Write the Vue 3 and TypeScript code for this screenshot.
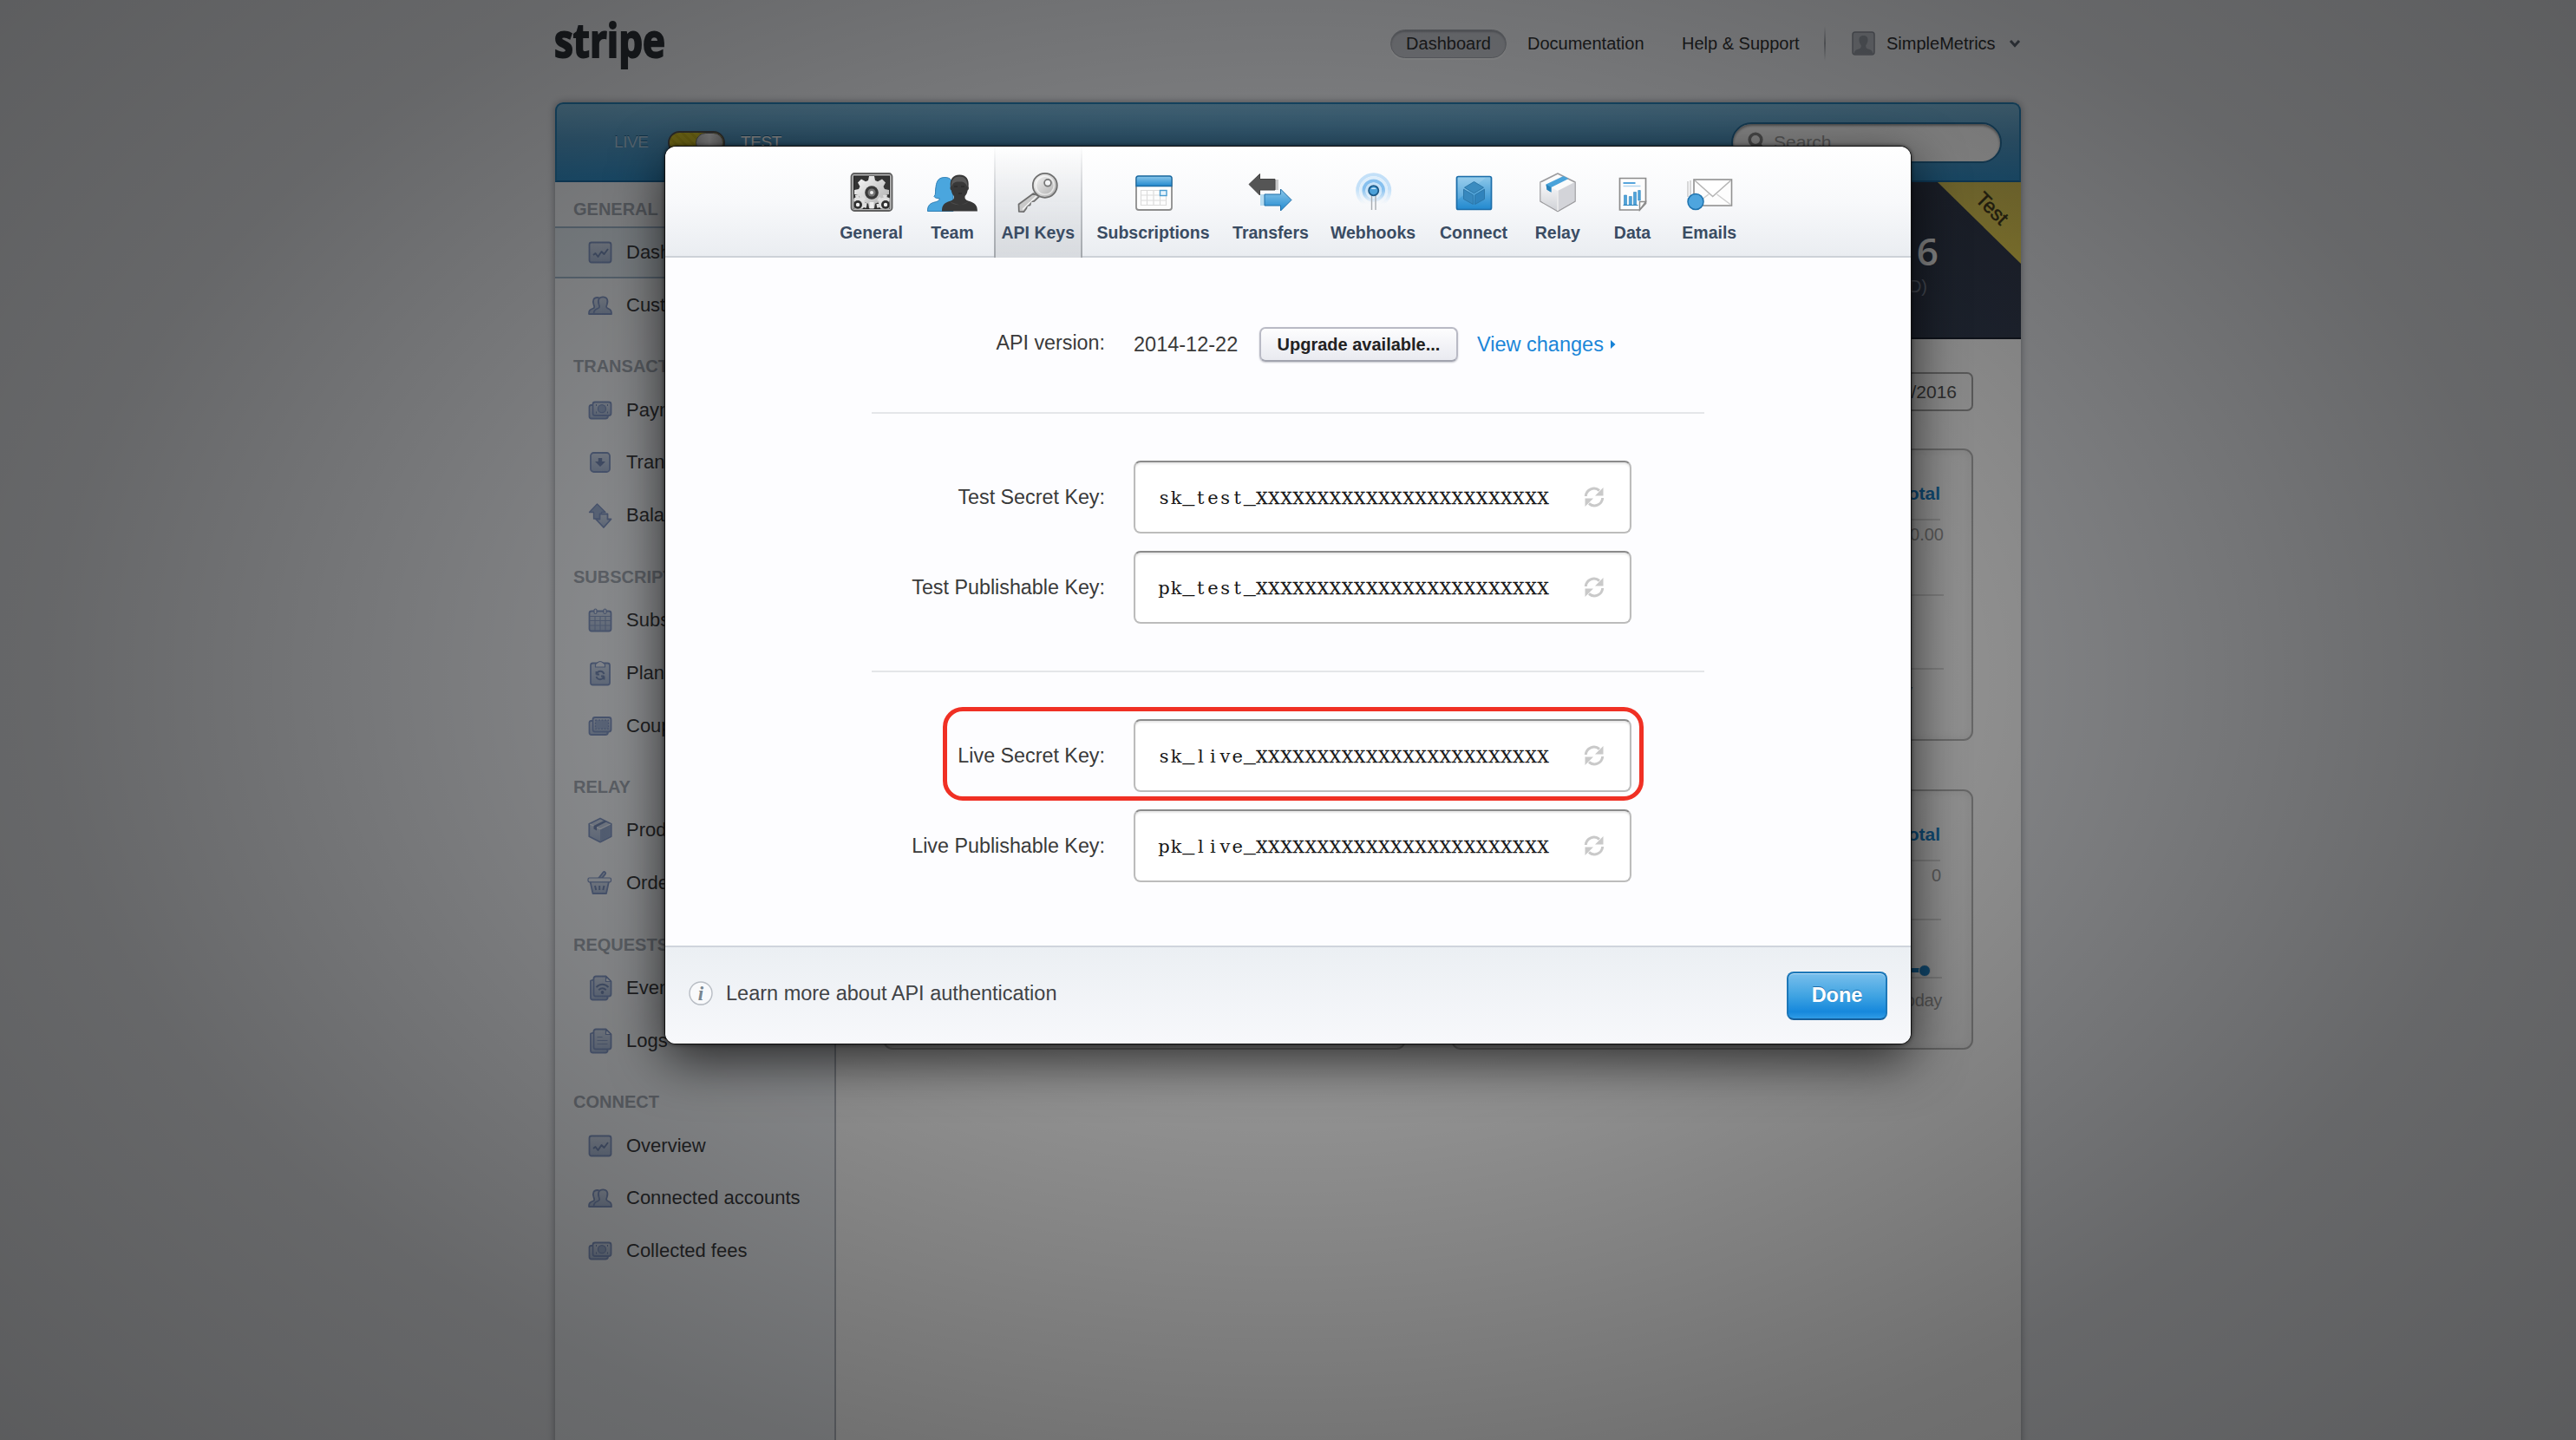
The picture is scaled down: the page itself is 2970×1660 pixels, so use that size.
<script setup lang="ts">
interface NavItem { icon: string; label: string; active?: boolean }
interface NavGroup { title: string; items: NavItem[] }
interface Tab { icon: string; label: string; width: number; active?: boolean }
interface ApiKey { label: string; prefix: string; highlighted?: boolean }

const groups: NavGroup[] = [
  { title: 'GENERAL', items: [{ icon: 'chart', label: 'Dashboard', active: true }, { icon: 'people', label: 'Customers' }] },
  { title: 'TRANSACTIONS', items: [{ icon: 'cash', label: 'Payments' }, { icon: 'down', label: 'Transfers' }, { icon: 'swap', label: 'Balance' }] },
  { title: 'SUBSCRIPTIONS', items: [{ icon: 'calendar', label: 'Subscriptions' }, { icon: 'clipboard', label: 'Plans' }, { icon: 'coupon', label: 'Coupons' }] },
  { title: 'RELAY', items: [{ icon: 'box', label: 'Products' }, { icon: 'basket', label: 'Orders' }] },
  { title: 'REQUESTS', items: [{ icon: 'events', label: 'Events' }, { icon: 'logs', label: 'Logs' }] },
  { title: 'CONNECT', items: [{ icon: 'chart', label: 'Overview' }, { icon: 'people', label: 'Connected accounts' }, { icon: 'cash', label: 'Collected fees' }] },
]

const tabs: Tab[] = [
  { icon: 'general', label: 'General', width: 98 },
  { icon: 'team', label: 'Team', width: 89 },
  { icon: 'key', label: 'API Keys', width: 108.5, active: true },
  { icon: 'subs', label: 'Subscriptions', width: 157 },
  { icon: 'transfers', label: 'Transfers', width: 114 },
  { icon: 'webhooks', label: 'Webhooks', width: 122 },
  { icon: 'connect', label: 'Connect', width: 110 },
  { icon: 'relay', label: 'Relay', width: 83.5 },
  { icon: 'data', label: 'Data', width: 89 },
  { icon: 'emails', label: 'Emails', width: 88.5 },
]

const testKeys: ApiKey[] = [
  { label: 'Test Secret Key:', prefix: 'sk_test_' },
  { label: 'Test Publishable Key:', prefix: 'pk_test_' },
]
const liveKeys: ApiKey[] = [
  { label: 'Live Secret Key:', prefix: 'sk_live_', highlighted: true },
  { label: 'Live Publishable Key:', prefix: 'pk_live_' },
]
const keyGroups: ApiKey[][] = [testKeys, liveKeys]

// Typewriter cells: every character is centred in a cell of equal width.
const CELL = 14.1
const cellCentres = Array.from({ length: 32 }, (_, i) => (i * CELL + CELL / 2).toFixed(2)).join(' ')
const mask = 'X'.repeat(24)
function segments(prefix: string): { text: string; kind: string }[] {
  const parts = prefix.split('_')
  return [
    { text: parts[0], kind: 'plain' },
    { text: '_', kind: 'rule' },
    { text: parts[1], kind: 'plain' },
    { text: '_', kind: 'rule' },
    { text: mask, kind: 'mask' },
  ]
}
</script>

<template>
  <div class="page">
    <header class="top">
      <svg class="logo" width="132" height="80" viewBox="0 0 132 80">
        <text x="0" y="65.500" textLength="128" lengthAdjust="spacingAndGlyphs">stripe</text>
      </svg>
      <nav class="topnav">
        <a class="pill">Dashboard</a>
        <a class="doc">Documentation</a>
        <a class="help">Help &amp; Support</a>
        <i class="bar"></i>
        <svg class="avatar" width="27" height="28" viewBox="0 0 27 28">
          <rect x="1" y="1" width="25" height="26" rx="3" fill="#b9bdc5" stroke="#8a8f99" stroke-width="1.5" />
          <path d="M13.500 5c-4 0-5.500 2.500-5 6 .3 2.500 1.300 4 2.300 5.200 0 3-1 3.800-3.800 4.600-2.600.8-4 2-4.500 5.200h22c-.5-3.200-1.900-4.400-4.500-5.200-2.800-.8-3.800-1.600-3.800-4.600 1-1.200 2-2.700 2.300-5.200.5-3.500-1-6-5-6z" fill="#9298a1" />
        </svg>
        <a class="user">SimpleMetrics</a>
        <svg class="chev" width="14" height="10" viewBox="0 0 14 10"><path d="M2 2l5 5.500L12 2" fill="none" stroke="#5c6470" stroke-width="3" /></svg>
      </nav>
    </header>

    <div class="shell">
      <div class="bluebar">
        <span class="live">LIVE</span>
        <span class="switch"><i></i></span>
        <span class="test">TEST</span>
        <div class="search">
          <svg width="22" height="26" viewBox="0 0 22 26"><circle cx="10" cy="10" r="6.800" fill="none" stroke="#8a8a8a" stroke-width="3.600" /><path d="M14 15l6 7" stroke="#8a8a8a" stroke-width="4" /></svg>
          <span>Search</span>
        </div>
      </div>
      <div class="cols">
        <aside class="side">
          <section v-for="g in groups" :key="g.title">
            <h3>{{ g.title }}</h3>
            <a v-for="it in g.items" :key="it.label" class="item" :class="{ on: it.active }">
              <svg width="28" height="30" viewBox="0 0 28 30" class="sic">
                <defs>
                  <linearGradient id="sg" x1="0" y1="0" x2="0" y2="1"><stop offset="0" stop-color="#cdd7e8" /><stop offset="1" stop-color="#a7b8d5" /></linearGradient>
                </defs>
                <g v-if="it.icon === 'chart'">
                  <rect x="1.500" y="3.500" width="25" height="23" rx="2.500" />
                  <path d="M6 18l2.500-2 3 4 4-6 3 3 4.500-6" class="ln" />
                </g>
                <g v-else-if="it.icon === 'people'">
                  <path d="M1 25c-.3-4 1-5 5-6.500 1.500-.6 1.500-2 .5-4.500-1.500-5 0-8 4-8s5 3 4 8l-1 11z" />
                  <path d="M6.500 25c0-4 1.500-5 5-6.500 2-.8 2-2 1-4.500-1.800-5.500.3-8.700 4.700-8.700s6.400 3.200 4.600 8.700c-1 2.500-1 3.700 1 4.500C26 20 27 21 27 25z" />
                </g>
                <g v-else-if="it.icon === 'cash'">
                  <path d="M5 9H3.500A2.300 2.300 0 0 0 1.500 11.300V22a2.500 2.500 0 0 0 2.500 2.500h16a3 3 0 0 0 3-2.500z" />
                  <rect x="5.500" y="5.500" width="21" height="15.500" rx="2.500" />
                  <circle cx="16" cy="13.200" r="4.500" class="disc" />
                  <path d="M9 9h1M22 9h1M9 17.500h1M22 17.500h1" class="ln" />
                </g>
                <g v-else-if="it.icon === 'down'">
                  <rect x="3" y="4" width="22" height="22" rx="3.500" />
                  <path d="M11.800 10h4.400v4h3.800l-6 6-6-6h3.800z" class="solid" />
                </g>
                <g v-else-if="it.icon === 'swap'">
                  <path d="M10.500 2L20 11.500h-4.500V19h-9v-7.500H1.500z" class="disc" />
                  <path d="M18 29l-9-9.500h4.500V13.500h9v6h4z" />
                </g>
                <g v-else-if="it.icon === 'calendar'">
                  <rect x="1.500" y="4.500" width="25" height="23" rx="2.500" />
                  <path d="M2 10.500h24M2 15.500h24M2 21h24M8 11v16M14 11v16M20 11v16" class="thin" />
                  <rect x="7" y="2" width="3" height="5.500" rx="1.500" class="pale" /><rect x="18" y="2" width="3" height="5.500" rx="1.500" class="pale" />
                </g>
                <g v-else-if="it.icon === 'clipboard'">
                  <rect x="3" y="3.500" width="22" height="25" rx="2.500" />
                  <path d="M8.500 8V4.500C10 4.500 11 1.500 14 1.500s4 3 5.500 3V8z" class="pale" />
                  <path d="M9.500 16.500v-3.500M9.500 16.500H13M9.800 16c1.500-4 7-4.500 8.700 0M18.500 18.500v4M18.500 18.500H15M18.200 19c-1.500 4-7 4.500-8.700 0" class="ln" />
                </g>
                <g v-else-if="it.icon === 'coupon'">
                  <path d="M5 9H3.500A2.300 2.300 0 0 0 1.500 11.300V22.500A2.500 2.500 0 0 0 4 25h16a3 3 0 0 0 3-2.500z" />
                  <rect x="5.500" y="5" width="21" height="16.500" rx="2.500" />
                  <rect x="8.500" y="8.200" width="15" height="10" class="disc" stroke-dasharray="2 1.500" />
                </g>
                <g v-else-if="it.icon === 'box'">
                  <path d="M14 1.500l12.700 6.200v14.600L14 28.700 1.300 22.300V7.700z" />
                  <path d="M14 13.700v14l11.800-5.900V8z" class="shade" />
                  <path d="M2.200 8L14 13.700 25.800 8" class="edge" />
                  <path d="M6.500 10L18.500 4l3 1.300L10 11.300v4.200l-3.500-2z" class="solid" />
                </g>
                <g v-else-if="it.icon === 'basket'">
                  <path d="M12 9.500l5.500-7c1.200-1.300 3.500.3 2.500 1.900l-4 5.100z" />
                  <path d="M2.500 13h21.500l-3 14H5.500z" />
                  <rect x="0" y="9" width="26.500" height="4.800" rx="1.500" class="pale" />
                  <path d="M8 18l1.200 5M13.200 18v5M18.500 18l-1.200 5" class="ln" />
                </g>
                <g v-else>
                  <path d="M3 6.500v20A2.500 2.500 0 0 0 5.500 28.500H20a3 3 0 0 0 2.700-2.500L6 5.500z" />
                  <path d="M9 1.500h11.500l6 6V22a2.500 2.500 0 0 1-2.500 2.500H9A2.500 2.500 0 0 1 6.500 22V4A2.500 2.500 0 0 1 9 1.500z" />
                  <path d="M20.500 1.500v6h6z" class="pale" />
                  <path v-if="it.icon === 'logs'" d="M10.500 10.500h6M10.500 14.500h12M10.500 18.500h12" class="thin" />
                  <g v-else>
                    <path d="M9.500 14.200c4-4.600 10-4.600 14 0M12.200 17.200c2.600-2.500 6-2.500 8.600 0" class="ln" />
                    <circle cx="16.500" cy="20" r="1.900" class="solid" />
                  </g>
                </g>
              </svg>
              <span>{{ it.label }}</span>
            </a>
          </section>
        </aside>
        <main class="main">
          <div class="stats">
            <div class="big">6</div>
            <div class="cur">(USD)</div>
            <div class="ribbon"><span>Test</span></div>
          </div>
          <div class="range"><span>01/01/2016</span></div>
          <div class="cards">
            <div class="card c1"></div>
            <div class="card c1">
              <b>Total</b>
              <div class="r1">$0.00</div>
              <div class="g1"></div>
              <div class="g1b"></div>
              <div class="d1">Today</div>
            </div>
          </div>
          <div class="cards second">
            <div class="card c2"></div>
            <div class="card c2">
              <b>Total</b>
              <div class="r2">0</div>
              <div class="g2"></div>
              <div class="plot"><i></i></div>
              <div class="d2">Today</div>
            </div>
          </div>
        </main>
      </div>
    </div>

    <div class="dim"></div>

    <div class="modal">
      <div class="tabs">
        <div v-for="t in tabs" :key="t.label" class="tab" :class="{ sel: t.active }" :style="{ width: t.width + 'px' }">
          <div class="tabin">
            <svg width="60" height="48" viewBox="0 0 60 48">
              <defs>
                <linearGradient id="blu" x1="0" y1="0" x2="0" y2="1"><stop offset="0" stop-color="#8cc8ea" /><stop offset="1" stop-color="#2289cf" /></linearGradient>
                <linearGradient id="sil" x1="0" y1="0" x2="1" y2="1"><stop offset="0" stop-color="#fafafa" /><stop offset="1" stop-color="#a9a9a9" /></linearGradient>
                <linearGradient id="bx" x1="0" y1="0" x2="0" y2="1"><stop offset="0" stop-color="#fafafb" /><stop offset="1" stop-color="#cfd1d6" /></linearGradient>
                <clipPath id="gc"><rect x="9.500" y="5" width="41" height="37.500" /></clipPath>
                <linearGradient id="wv" gradientUnits="userSpaceOnUse" x1="0" y1="20" x2="0" y2="37"><stop offset="0" stop-color="#fff" /><stop offset="1" stop-color="#000" /></linearGradient>
                <mask id="wm"><rect width="60" height="48" fill="url(#wv)" /></mask>
              </defs>
              <g v-if="t.icon === 'general'">
                <rect x="6.500" y="2" width="47" height="43" rx="3.500" fill="#b5b5b5" stroke="#606060" stroke-width="1.800" />
                <rect x="9.500" y="5" width="41" height="37.500" fill="#343434" stroke="#222" />
                <g clip-path="url(#gc)">
                  <path d="M27 5h6l1 5 3 1.300 5-2.800 4 4-2.500 4.500L45 20l5 1v5l-5 1-1.500 3 2.500 4-4 4-5-2.600-3 1.300-1 5.300h-6l-1-5.300-3-1.300-5 2.600-4-4 2.500-4L15 27l-5-1v-5l5-1 1.500-3L14 12.500l4-4 5 2.800 3-1.300z" fill="url(#sil)" />
                  <g fill="#dedede" stroke="#dedede" stroke-width="5" stroke-dasharray="4 3"><circle cx="14" cy="37" r="8" /><circle cx="46" cy="37" r="8" /></g>
                  <path d="M27.500 35h5v8h-5z" fill="#eee" />
                  <circle cx="30" cy="24" r="7.800" fill="#3a3a3a" /><circle cx="30" cy="24" r="4.500" fill="#777" /><circle cx="30" cy="24" r="2" fill="#eee" />
                  <circle cx="14" cy="38" r="5" fill="#2f2f2f" /><circle cx="14" cy="38" r="2.200" fill="#f2f2f2" />
                  <circle cx="46" cy="38" r="5" fill="#2f2f2f" /><circle cx="46" cy="38" r="2.200" fill="#f2f2f2" />
                </g>
              </g>
              <g v-else-if="t.icon === 'team'">
                <path d="M1.500 45.500c0-7 2.500-9 9-10.700 3.500-1 4.500-1.500 4.500-4.300-2.500.4-5-.3-6-2 2.500-2.500 1-6 2-11C12 9.500 15 6.500 21.500 6.500s9 4 9.500 11v28z" fill="#4aa6de" stroke="#2f7fb5" />
                <path d="M18 45.500c0-7.500 2.500-9.500 9.500-11.800 4-1.300 4.800-2.700 4.300-5.700-1.800-2-2.600-4-3-6.500-1.200-.5-1.700-2.500-1-4.500-.8-8 2.500-13.500 10.500-13.500S49.500 9 48.600 17c.8 2 .2 4-1 4.500-.4 2.500-1.200 4.500-3 6.500-.5 3 .3 4.400 4.300 5.700 7 2.300 10 4.300 10 11.800z" fill="#383838" />
                <path d="M29 18c1-5 4-7 9-6.500 4-.5 8 1 9.300 6.500.6-8-2.500-12.500-9-12.500S28 10 29 18z" fill="#5a5a5a" /><path d="M32 17h4M40 17h4M37 25h4" stroke="#222" />
                <path d="M27 34.500c5 5 16 5 22 0l-10 4z" fill="#4b4b4b" />
              </g>
              <g v-else-if="t.icon === 'key'">
                <path d="M24.500 25L7.500 37.500 7.800 46l5.500.2 3-4 .8-3 3.500-.8.800-4 4-.5 6-5.500z" fill="#c9c9c9" stroke="#6e6e6e" stroke-width="1.700" stroke-linejoin="round" />
                <path d="M12 43.500L28 28" stroke="#f3f3f3" stroke-width="1.600" />
                <circle cx="37.800" cy="15.800" r="14" fill="url(#sil)" stroke="#6e6e6e" stroke-width="1.800" />
                <circle cx="37.800" cy="15.800" r="10.500" fill="none" stroke="#fff" stroke-opacity=".6" stroke-width="1.500" />
                <circle cx="41" cy="12.800" r="3.900" fill="#f3f4f5" stroke="#757575" stroke-width="1.700" />
              </g>
              <g v-else-if="t.icon === 'subs'">
                <rect x="10" y="5.500" width="41" height="38.500" rx="3" fill="#fdfdfd" stroke="#8d8d8d" stroke-width="1.800" />
                <path d="M10 16.500V7.500A2.500 2.500 0 0 1 12.500 5h36A2.500 2.500 0 0 1 51 7.500v9z" fill="url(#blu)" stroke="#1d6da5" stroke-width="1.300" />
                <path d="M15.500 21.500h29v17h-29zM22.500 21.500v17M30 21.500v17M37.500 21.500v17M15.500 27h29M15.500 33h29" fill="none" stroke="#dcdcdc" stroke-width="1.200" />
                <rect x="37.500" y="21.500" width="7.500" height="6" fill="#e5f3fc" stroke="#4b9dd0" stroke-width="1.400" />
              </g>
              <g v-else-if="t.icon === 'transfers'">
                <path d="M35 9h4v12h-4z" fill="#aaa" opacity=".6" />
                <path d="M5 14.500L17.500 2.500v6H35v12.500H17.500v6z" fill="#555" stroke="#444" stroke-linejoin="round" />
                <path d="M18 26h5v13h-5z" fill="#8cc8ea" opacity=".6" />
                <path d="M54 32.500L41.500 20v6H23v13h18.500v6z" fill="url(#blu)" stroke="#1e6ea8" stroke-linejoin="round" />
              </g>
              <g v-else-if="t.icon === 'webhooks'">
                <g mask="url(#wm)" fill="none">
                  <circle cx="30.700" cy="21.700" r="18.500" stroke="#c3e0f8" stroke-width="4" />
                  <circle cx="30.700" cy="21.700" r="15" stroke="#deeefb" stroke-width="3" />
                  <circle cx="30.700" cy="21.700" r="11.300" stroke="#86c0ef" stroke-width="4" />
                  <circle cx="30.700" cy="21.700" r="8" stroke="#c6e2f8" stroke-width="3" />
                </g>
                <path d="M28.500 26v18M33 26v18" stroke="#a9adb2" stroke-width="1.400" />
                <circle cx="30.700" cy="21.700" r="5.600" fill="#4ba0d8" stroke="#1b5988" stroke-width="1.800" /><path d="M27.500 20a4 3.500 0 0 1 6.500 0z" fill="#cfe9fa" />
              </g>
              <g v-else-if="t.icon === 'connect'">
                <rect x="10.500" y="5.500" width="40" height="38" rx="2" fill="url(#blu)" stroke="#1c6da9" stroke-width="1.700" />
                <path d="M12 32L44 7H12z" fill="#fff" opacity=".12" />
                <path d="M30.500 11.500l11 6.700-11 6.500-11-6.500z" fill="#3b8cc0" stroke="#2c77a9" />
                <path d="M18.500 20.200l11 6.600v10.700l-11-6z" fill="#3788be" stroke="#2c77a9" /><path d="M42.500 20.200l-11 6.600v10.700l11-6z" fill="#3083bc" stroke="#2c77a9" />
              </g>
              <g v-else-if="t.icon === 'relay'">
                <path d="M30 2l20 10v22L30 45.500 10 34V12z" fill="#fbfbfb" stroke="#9c9c9f" stroke-width="1.600" stroke-linejoin="round" />
                <path d="M10.500 12L30 22v23L10.500 33.800z" fill="url(#bx)" /><path d="M49.500 12L30 22v23l19.500-11.200z" fill="#d3d4d9" /><path d="M30 22v23" stroke="#eee" stroke-width="1.500" />
                <path d="M16.500 14.500L36.500 5l6 3L22.500 18v5.500l-5-3z" fill="#4aa3da" /><path d="M16.500 14.500l6 3.500v5.800l-5-3z" fill="#2b83ba" />
              </g>
              <g v-else-if="t.icon === 'data'">
                <path d="M15.500 7.500h30v29l-7 7.500h-23z" fill="#fdfdfd" stroke="#8c8c8c" stroke-width="1.700" />
                <path d="M45.500 34.500h-7v9.500z" fill="#fff" stroke="#8c8c8c" stroke-width="1.400" />
                <path d="M19.500 13h14" stroke="#56a5dc" stroke-width="2" /><path d="M19.500 16.500h20" stroke="#b4d6ee" stroke-width="1.500" />
                <path d="M20.500 27v11h3V27zM26.300 28.500V38h3v-9.500zM31.500 23.500V38h3V23.500zM36.700 21.500V33h2.600V21.500z" fill="#4fa3da" stroke="#2f85bd" stroke-width=".6" /><path d="M19.500 38.500h17" stroke="#2f85bd" />
              </g>
              <g v-else>
                <path d="M5 11v18M8 10v20" stroke="#cfcfcf" stroke-width="1.600" />
                <rect x="12" y="9" width="43.500" height="30" fill="#fdfdfd" stroke="#909090" stroke-width="1.600" />
                <path d="M13 38l16-12M54.500 38l-16-12" stroke="#cfcfcf" stroke-width="1.500" /><path d="M13 10l20.700 18.500L54.500 10" fill="#fff" stroke="#b5b5b5" stroke-width="1.600" />
                <circle cx="14" cy="34.500" r="9" fill="#4ea5de" stroke="#1f73ae" stroke-width="1.500" />
              </g>
            </svg>
            <span>{{ t.label }}</span>
          </div>
        </div>
      </div>

      <div class="body">
        <div class="row version">
          <label>API version:</label>
          <span class="date">2014-12-22</span>
          <button class="upgrade">Upgrade available...</button>
          <a class="view">View changes <svg width="6" height="10" viewBox="0 0 6 10"><path d="M0 0l5.500 5L0 10z" fill="#1682d6" /></svg></a>
        </div>
        <template v-for="(kg, gi) in keyGroups" :key="gi">
          <hr />
          <div class="keys">
            <div v-for="k in kg" :key="k.label" class="row">
              <label>{{ k.label }}</label>
              <div class="field">
                <svg class="keytext" width="452" height="40" viewBox="0 0 452 40">
                  <text :x="cellCentres" y="27.500"><tspan v-for="(s, si) in segments(k.prefix)" :key="si" :class="s.kind">{{ s.text }}</tspan></text>
                </svg>
                <svg class="refresh" width="24" height="24" viewBox="0 0 24 24">
                  <path d="M2.300 11A9.500 9.500 0 0 1 18 4.500" fill="none" stroke="#c9c9c9" stroke-width="3" />
                  <path d="M22.500 1v9.500h-9.500z" fill="#c9c9c9" />
                  <path d="M21.700 13A9.500 9.500 0 0 1 6 19.500" fill="none" stroke="#c9c9c9" stroke-width="3" />
                  <path d="M1.500 23v-9.500H11z" fill="#c9c9c9" />
                </svg>
              </div>
              <i v-if="k.highlighted" class="ring"></i>
            </div>
          </div>
        </template>
      </div>

      <footer class="foot">
        <svg width="30" height="32" viewBox="0 0 30 32">
          <circle cx="15" cy="16" r="13" fill="#c8ccd2" />
          <circle cx="15" cy="15" r="13" fill="#f8f9fb" stroke="#b9bec5" stroke-width="1.400" />
          <text x="15" y="23" text-anchor="middle" class="info">i</text>
        </svg>
        <span>Learn more about API authentication</span>
        <button class="done">Done</button>
      </footer>
    </div>
  </div>
</template>

<style>
html, body { margin: 0; height: 1660px; overflow: hidden; }
</style>

<style scoped>
.page { position: relative; width: 2970px; height: 1660px; overflow: hidden; background: #e9ebef; font-family: "Liberation Sans", Arial, Helvetica, sans-serif; color: #2f3032; }
.page * { box-sizing: border-box; }
button { font-family: inherit; margin: 0; padding: 0; }

.top { height: 118px; width: 1692px; margin-left: 639px; display: flex; align-items: flex-start; justify-content: space-between; }
.logo { display: block; overflow: visible; }
.logo text { font: 700 53px "Open Sans", sans-serif; fill: #2b3036; stroke: #2b3036; stroke-width: 2px; }
.topnav { display: flex; align-items: center; height: 34px; margin-top: 33px; font-size: 20px; white-space: nowrap; padding-right: 1px; }
.pill { width: 134px; height: 33px; border-radius: 17px; background: #c4c7ce; border: 1px solid #a4a8b0; box-shadow: inset 0 2px 2px #9a9ea6, 0 2px 0 #f4f5f7; display: flex; align-items: center; justify-content: center; }
.doc { margin-left: 24px; width: 135px; }
.help { margin-left: 43px; width: 136px; }
.bar { width: 2px; height: 40px; margin-left: 28px; background: linear-gradient(#a0a4ab00, #a0a4ab, #a0a4ab00); }
.avatar { margin-left: 30px; }
.user { margin-left: 13px; width: 128px; }
.chev { margin-left: 13px; }

.shell { width: 1690px; height: 1560px; margin-left: 640px; border-radius: 9px 9px 0 0; background: #fff; box-shadow: 0 0 8px rgba(40, 45, 55, .45); }
.bluebar { height: 92px; border-radius: 9px 9px 0 0; border: 2px solid #277fb4; border-bottom-color: #1b6ba3; background: linear-gradient(#7cb9db, #559cc8 45%, #318dc6); display: flex; align-items: center; padding-left: 66px; font-size: 19px; letter-spacing: -.4px; }
.live { width: 62px; color: #a9cae0; text-shadow: 0 -1px #23658f; }
.switch { width: 66px; height: 27px; border-radius: 14px; border: 2px solid #555; background: repeating-linear-gradient(45deg, #d5c42a 0 4px, #c9b820 4px 7px); margin-right: 18px; }
.switch i { display: block; width: 32px; height: 23px; margin-left: 30px; border-radius: 12px; background: linear-gradient(90deg, #ccc, #f3f3f3, #bdbdbd); border: 1px solid #777; }
.test { color: #fff; text-shadow: 0 -1px #23658f; }
.search { margin-left: auto; margin-right: 20px; width: 312px; height: 47px; border-radius: 24px; background: #fff; border: 2px solid #256f9e; box-shadow: inset 0 2px 3px #999; display: flex; align-items: center; padding-left: 16px; font-size: 21px; color: #a5a5a5; letter-spacing: 0; }
.search span { margin-left: 9px; }
.cols { display: flex; height: 1470px; }
.side { width: 324px; border-right: 2px solid #b4b9c2; background: #f1f4f8; overflow: hidden; flex: none; }
.side h3 { margin: 0; height: 60px; font-size: 20px; line-height: 25px; padding: 28px 0 7px 21px; color: #a1a8b2; font-weight: 700; }
.side section:first-child h3 { height: 50.6px; padding-top: 18.6px; }
.item { display: flex; align-items: center; height: 60.8px; padding-left: 38px; font-size: 22px; white-space: nowrap; border: 0 solid #9fb6cb; color: #3a3b3e; }
.item span { margin-left: 16px; }
.item.on { background: #e2ebf2; border-width: 2px 0; }
.sic { flex: none; overflow: visible; }
.sic rect, .sic path, .sic circle { fill: url(#sg); stroke: #8095c2; stroke-width: 1.8; stroke-linejoin: round; }
.sic .ln { fill: none; stroke: #758ab4; stroke-width: 1.9; }
.sic .thin { fill: none; stroke: #8a9dc4; stroke-width: 1.1; }
.sic .solid { fill: #7287b2; stroke: none; }
.sic .pale { fill: #e3e9f3; stroke-width: 1.2; }
.sic .disc { fill: #9db0d2; stroke-width: 1.3; }
.sic .shade { fill: #94a8cc; stroke: none; }
.sic .edge { fill: none; stroke: #e9eef6; stroke-width: 1.3; }

.main { flex: 1; min-width: 0; position: relative; }
.stats { height: 181px; background: linear-gradient(#323a4c, #343e52); border-bottom: 2px solid #1b2231; position: relative; overflow: hidden; text-align: right; }
.big { padding: 51px 95px 0 0; font: 600 44px/56px "Open Sans", sans-serif; color: #fff; }
.cur { padding-right: 108px; font-size: 20px; line-height: 26px; color: #7d8698; }
.ribbon { position: absolute; right: 0; top: 0; width: 96px; height: 94px; background: linear-gradient(#d9c558, #ecd654); clip-path: polygon(0 0, 100% 0, 100% 100%); }
.ribbon span { position: absolute; left: 36px; top: 17px; width: 54px; text-align: center; font-size: 23px; line-height: 26px; font-weight: 400; color: #3f381c; -webkit-text-stroke: .5px #3f381c; transform: rotate(45deg); }
.range { margin: 38px 55px 0 auto; width: 300px; height: 45px; border: 2px solid #a5a5a5; border-radius: 7px; text-align: right; padding-right: 17px; font-size: 21px; line-height: 41px; color: #555; }
.cards { display: flex; gap: 52px; margin: 43px 55px 0 54px; }
.cards.second { margin-top: 56px; }
.card { flex: 1; border: 2px solid #b8b8b8; border-radius: 11px; box-shadow: inset 0 0 12px #ececec; text-align: right; padding: 0 32px 0 0; color: #a0a0a0; font-size: 20px; }
.c1 { height: 337px; }
.c2 { height: 300px; }
.card b { display: block; height: 81px; padding-top: 36px; border-bottom: 2px solid #dedede; margin-right: 4px; font-size: 21px; line-height: 28px; color: #1b83cc; }
.r1, .r2 { line-height: 33px; }
.r2 { padding-right: 3px; }
.g1, .g1b, .g2 { border-bottom: 2px solid #dedede; }
.g1 { height: 54px; }
.g1b { height: 85px; }
.g2 { height: 35px; margin-right: 3px; }
.d1 { padding: 10px 36px 0 0; color: #666; line-height: 28px; }
.plot { height: 67px; border-bottom: 2px solid #dedede; margin-right: 2px; position: relative; }
.plot::before { content: ""; position: absolute; right: 24px; bottom: 5px; width: 200px; height: 5px; background: #1d83c8; }
.plot i { position: absolute; right: 13px; bottom: 0; width: 14px; height: 14px; border-radius: 7px; background: #1d83c8; border: 1px solid #eee; }
.d2 { line-height: 44px; padding: 3px 2px 0 0; letter-spacing: -.3px; }

.dim { position: absolute; inset: 0; background: radial-gradient(ellipse 2100px 1400px at 1485px 780px, rgba(0, 0, 0, .38) 0, rgba(0, 0, 0, .41) 30%, rgba(0, 0, 0, .56) 68%, rgba(0, 0, 0, .62) 100%); }

.modal { position: absolute; left: 766px; top: 168px; width: 1438px; height: 1036px; border-radius: 13px; border: 1px solid #111; background: #fdfdff; background-clip: padding-box; box-shadow: 0 18px 60px rgba(0, 0, 0, .7), 0 0 4px rgba(0, 0, 0, .6); display: flex; flex-direction: column; }
.tabs { height: 128px; flex: none; border-bottom: 2px solid #cdd1d7; border-radius: 12px 12px 0 0; background: linear-gradient(#fff, #f8f9fb 50%, #eaedf1); display: flex; padding-left: 188.5px; }
.tab { flex: none; display: flex; justify-content: center; height: 128px; }
.tabin { width: 100%; display: flex; flex-direction: column; align-items: center; padding-top: 29px; font-size: 19.5px; font-weight: 700; color: #3a4c63; white-space: nowrap; }
.tabin svg { display: block; flex: none; }
.tabin span { line-height: 24px; margin-top: 10px; }
.sel .tabin { width: 102px; border: solid; border-width: 0 2px; border-image: linear-gradient(rgba(160, 164, 169, 0), #a3a7ac) 1; background: linear-gradient(rgba(212, 215, 219, 0), #d8dbdf); }

.body { flex: 1; padding-top: 80px; font-size: 23.5px; color: #3a3a3a; }
.row { display: flex; align-items: center; position: relative; }
.row label { width: 507px; text-align: right; margin-right: 33px; font-size: 23.3px; padding-top: 1px; }
.version { height: 40px; }
.version label { margin-top: -5px; }
.date { width: 145px; }
.upgrade { width: 229px; height: 40px; border: 2px solid #b9bac5; border-bottom-color: #a2a4af; border-radius: 7px; background: linear-gradient(#fdfdfe, #e9eaf0); box-shadow: 0 1px 2px #c4c5cc; font-size: 20px; font-weight: 700; color: #222; white-space: nowrap; }
.view { margin-left: 22px; color: #1b86d8; white-space: nowrap; }
.view svg { margin-left: 2px; vertical-align: 3px; }
.body hr { width: 960px; height: 2px; border: 0; background: #e4e6e9; margin: 58px 0 0 238px; }
.keys + hr { margin-top: 54px; }
.keys { margin-top: 54px; display: flex; flex-direction: column; gap: 20px; }
.field { width: 574px; height: 84px; border: 2px solid #bcbcbc; border-top-color: #8b8b8b; border-radius: 8px; background: #fff; box-shadow: inset 0 2px 2px #e8e8e8; display: flex; align-items: center; padding-left: 26px; }
.keytext { flex: none; overflow: visible; }
.keytext text { font-family: "DejaVu Serif", serif; font-size: 18.5px; text-anchor: middle; fill: #161616; }
.plain { font-size: 21px; }
.rule { font-family: "Liberation Mono", monospace; font-size: 23.5px; }
.mask { stroke: #161616; stroke-width: .3px; }
.refresh { margin-left: 39px; }
.ring { position: absolute; left: 320px; top: -14px; width: 808px; height: 108px; border: 5px solid #f03024; border-radius: 23px; }

.foot { height: 113px; flex: none; border-top: 2px solid #cfd4dc; border-radius: 0 0 12px 12px; background: linear-gradient(#ebeff3, #f7f8fb); display: flex; align-items: center; padding: 0 27px 0 26px; font-size: 23.5px; color: #414346; }
.foot span { margin: -4px 0 0 14px; }
.foot svg { margin-top: -4px; }
.info { font: italic 700 23px "Liberation Serif", serif; fill: #77858f; }
.done { margin-left: auto; width: 116px; height: 56px; border: 2px solid #1c77b8; border-bottom-color: #155f9b; border-radius: 8px; background: linear-gradient(#79bfec, #3fa3e2 50%, #1688dc 85%, #2f9be5); box-shadow: inset 0 1px #b5dcf5; color: #fff; font-size: 23.5px; font-weight: 700; text-shadow: 0 -1px #1a6cab; }
</style>
